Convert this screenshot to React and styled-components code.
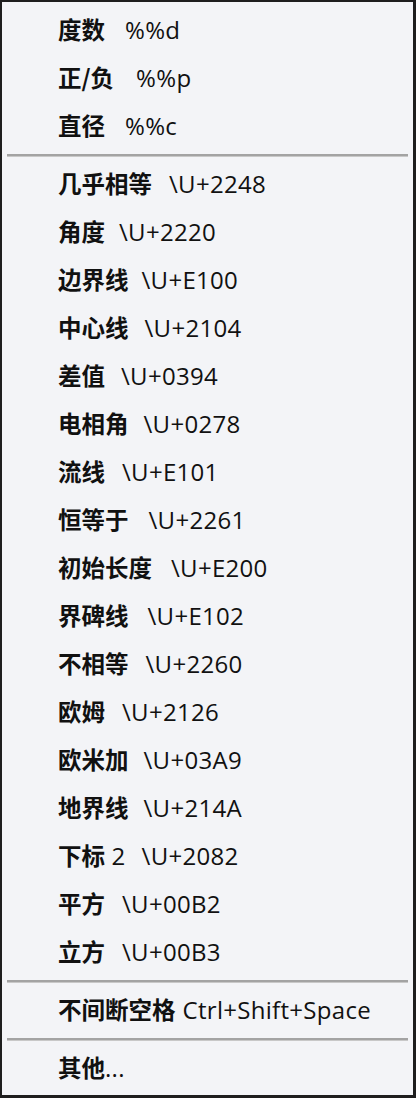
import React from 'react';
import styled, { createGlobalStyle } from 'styled-components';

const GlobalStyle = createGlobalStyle`
  html, body {
    margin: 0;
    padding: 0;
    background: #f2f3f6;
  }
  * {
    box-sizing: border-box;
  }
`;

const groups = [
  [
    { label: '度数', code: '%%d', gap: 20 },
    { label: '正/负', code: '%%p', gap: 22 },
    { label: '直径', code: '%%c', gap: 20 },
  ],
  [
    { label: '几乎相等', code: '\\U+2248', gap: 17 },
    { label: '角度', code: '\\U+2220', gap: 14 },
    { label: '边界线', code: '\\U+E100', gap: 13 },
    { label: '中心线', code: '\\U+2104', gap: 16 },
    { label: '差值', code: '\\U+0394', gap: 16 },
    { label: '电相角', code: '\\U+0278', gap: 15 },
    { label: '流线', code: '\\U+E101', gap: 17 },
    { label: '恒等于', code: '\\U+2261', gap: 20 },
    { label: '初始长度', code: '\\U+E200', gap: 19 },
    { label: '界碑线', code: '\\U+E102', gap: 19 },
    { label: '不相等', code: '\\U+2260', gap: 17 },
    { label: '欧姆', code: '\\U+2126', gap: 17 },
    { label: '欧米加', code: '\\U+03A9', gap: 15 },
    { label: '地界线', code: '\\U+214A', gap: 15 },
    { label: '下标', tail: ' 2', code: '\\U+2082', gap: 16 },
    { label: '平方', code: '\\U+00B2', gap: 17 },
    { label: '立方', code: '\\U+00B3', gap: 17 },
  ],
  [{ label: '不间断空格', code: 'Ctrl+Shift+Space', gap: 7 }],
  [{ label: '其他', code: '...', gap: 0 }],
];

function App() {
  return (
    <>
      <GlobalStyle />
      <Menu>
        {groups.map((items, gi) => (
          <React.Fragment key={gi}>
            {gi > 0 && <Separator />}
            {items.map((item) => (
              <Item key={item.label}>
                <Label>{item.label}</Label>
                {item.tail && <Code $gap={0}>{item.tail}</Code>}
                <Code $gap={item.gap}>{item.code}</Code>
              </Item>
            ))}
          </React.Fragment>
        ))}
      </Menu>
    </>
  );
}

const Menu = styled.div`
  width: 416px;
  height: 1098px;
  display: flex;
  flex-direction: column;
  padding: 4px 0 3px 0;
  background: #f3f4f7;
  border-style: solid;
  border-color: #1e1e1e;
  border-width: 2px 3px 3px 2px;
`;

const Item = styled.div`
  height: 48px;
  flex: none;
  display: flex;
  align-items: center;
  padding-left: 56px;
  color: #111111;
  white-space: pre;
`;

const Label = styled.span`
  font-family: "Noto Sans CJK SC", "Noto Sans", sans-serif;
  font-weight: 700;
  font-size: 23.5px;
  line-height: 1;
`;

const Code = styled.span`
  margin-left: ${(p) => p.$gap}px;
  font-family: "Open Sans", "Noto Sans", sans-serif;
  font-weight: 400;
  font-size: 24px;
  line-height: 1;
  letter-spacing: 0.3px;
`;

const Separator = styled.div`
  height: 10px;
  flex: none;
  display: flex;
  align-items: center;
  padding: 0 5px 0 5px;

  &::before {
    content: '';
    flex: 1;
    height: 2px;
    background: #a3a3a3;
    border-bottom: 1px solid #c8c8c8;
  }
`;

export default App;
